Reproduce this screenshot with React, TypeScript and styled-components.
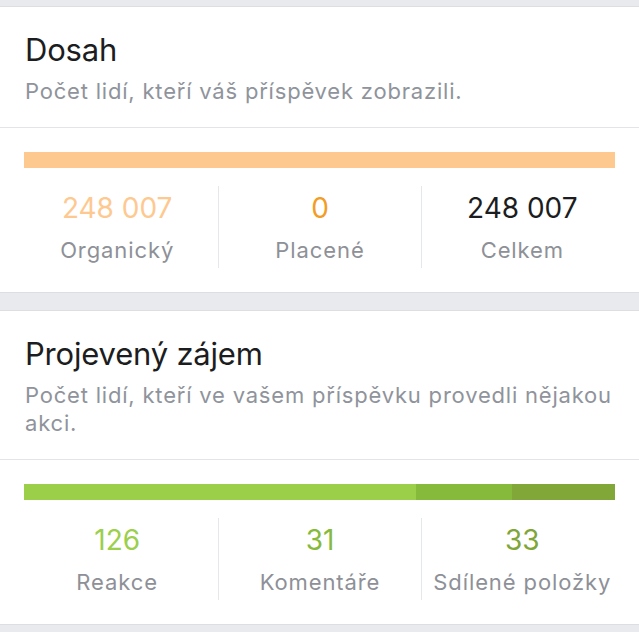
import React from "react";
import styled, { createGlobalStyle } from "styled-components";

const GlobalStyle = createGlobalStyle`
  html, body {
    margin: 0;
    padding: 0;
    background: #e9eaee;
  }
  body {
    font-family: Inter, "Noto Sans", sans-serif;
    -webkit-font-smoothing: antialiased;
  }
`;

const Page = styled.div`
  display: flex;
  flex-direction: column;
  gap: 17px;
  padding: 6px 0 7px;
  background: #e9eaee;
`;

const Card = styled.section`
  background: #ffffff;
  border-top: 1px solid #dcdee2;
  border-bottom: 1px solid #dcdee2;
`;

const Header = styled.div`
  padding: 25px 25px 22px;
  border-bottom: 1px solid #e3e4e7;
`;

const Title = styled.h2`
  margin: 0;
  font-size: 31px;
  line-height: 36px;
  font-weight: 400;
  color: #1c1d21;
  letter-spacing: -0.2px;
`;

const Subtitle = styled.p`
  margin: 9px 0 0;
  font-size: 22px;
  line-height: 28px;
  font-weight: 400;
  color: #8f939b;
  letter-spacing: 0.8px;
`;

const Body = styled.div`
  padding: 24px 0 24px;
`;

const Bar = styled.div`
  display: flex;
  height: 16px;
  margin: 0 24px;
`;

const Segment = styled.div<{ $color: string }>`
  background: ${(p) => p.$color};
`;

const Stats = styled.div`
  display: grid;
  grid-template-columns: repeat(3, 1fr);
  margin-top: 18px;
  padding: 0 16px;
`;

const Stat = styled.div`
  display: flex;
  flex-direction: column;
  align-items: center;
  padding: 5px 0 4px;
  & + & {
    border-left: 1px solid #e6e7ea;
  }
`;

const Value = styled.div<{ $color: string }>`
  font-size: 28px;
  line-height: 34px;
  font-weight: 400;
  color: ${(p) => p.$color};
`;

const Label = styled.div`
  margin-top: 11px;
  font-size: 22px;
  line-height: 28px;
  color: #8e9097;
  letter-spacing: 0.9px;
  white-space: nowrap;
`;

type Item = { value: string; label: string; color: string; share: number; bar: string };

const reach: Item[] = [
  { value: "248 007", label: "Organický", color: "#fec990", share: 1, bar: "#fec98e" },
  { value: "0", label: "Placené", color: "#f29d25", share: 0, bar: "#f29d25" },
  { value: "248 007", label: "Celkem", color: "#1c1d21", share: 0, bar: "transparent" },
];

const engagement: Item[] = [
  { value: "126", label: "Reakce", color: "#9bcf4c", share: 126, bar: "#9bcf4a" },
  { value: "31", label: "Komentáře", color: "#86ba3b", share: 31, bar: "#86ba3b" },
  { value: "33", label: "Sdílené položky", color: "#7fa638", share: 33, bar: "#82a739" },
];

const MetricCard: React.FC<{ title: string; subtitle: string; items: Item[] }> = ({
  title,
  subtitle,
  items,
}) => {
  const total = items.reduce((s, i) => s + i.share, 0);
  return (
    <Card>
      <Header>
        <Title>{title}</Title>
        <Subtitle>{subtitle}</Subtitle>
      </Header>
      <Body>
        <Bar>
          {items
            .filter((i) => i.share > 0)
            .map((i) => (
              <Segment key={i.label} $color={i.bar} style={{ width: `${(i.share / total) * 100}%` }} />
            ))}
        </Bar>
        <Stats>
          {items.map((i) => (
            <Stat key={i.label}>
              <Value $color={i.color}>{i.value}</Value>
              <Label>{i.label}</Label>
            </Stat>
          ))}
        </Stats>
      </Body>
    </Card>
  );
};

const App: React.FC = () => {
  return (
    <>
      <GlobalStyle />
      <Page>
        <MetricCard title="Dosah" subtitle="Počet lidí, kteří váš příspěvek zobrazili." items={reach} />
        <MetricCard
          title="Projevený zájem"
          subtitle="Počet lidí, kteří ve vašem příspěvku provedli nějakou akci."
          items={engagement}
        />
      </Page>
    </>
  );
};

export default App;
